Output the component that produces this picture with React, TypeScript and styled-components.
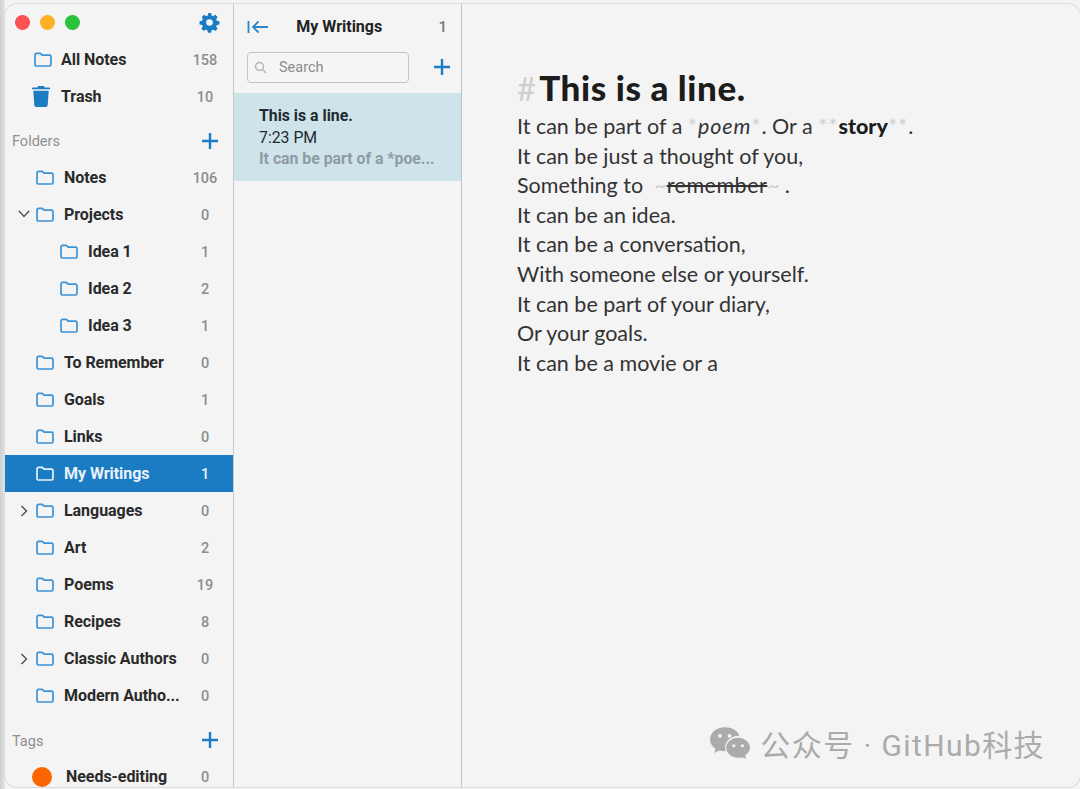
import * as React from 'react';
import styled, { createGlobalStyle } from 'styled-components';

const GlobalStyle = createGlobalStyle`
    html, body { margin: 0; padding: 0; background: #fbfbfb; }
    body { font-family: Roboto, "Liberation Sans", sans-serif; }
`;

const Page = styled.div`
    width: 1080px;
    height: 789px;
    padding: 4px 0 2px 5px;
    box-sizing: border-box;
    overflow: hidden;
    background: linear-gradient(90deg, #cfcfcf 0, #e4e4e4 5px, #f4f4f4 5px);
`;

const Window = styled.div`
    display: flex;
    height: 100%;
    background: #f4f4f4;
    border-radius: 12px;
    box-shadow: 0 0 0 1px #dcdcdc;
    overflow: hidden;
`;

const Sidebar = styled.div`
    width: 228px;
    flex: none;
    border-right: 1px solid #c9c9c9;
    overflow: hidden;
`;

const TopBar = styled.div`
    display: flex;
    align-items: center;
    justify-content: space-between;
    height: 37px;
    padding: 0 13px 0 10px;
    box-sizing: border-box;
`;

const Lights = styled.div`
    display: flex;
    gap: 10px;
`;

const Light = styled.span<{ $color: string }>`
    width: 15px;
    height: 15px;
    border-radius: 50%;
    background: ${p => p.$color};
`;

const Row = styled.div<{ $active?: boolean; $indent?: number }>`
    display: flex;
    align-items: center;
    height: 37px;
    padding-left: ${p => p.$indent ?? 31}px;
    padding-right: 15px;
    box-sizing: border-box;
    position: relative;
    background: ${p => (p.$active ? '#1b7bc3' : 'transparent')};
    color: ${p => (p.$active ? '#e8f2fa' : '#2a2a2a')};
`;

const RowIcon = styled.span<{ $gap?: number }>`
    display: flex;
    width: 18px;
    height: 18px;
    margin-right: ${p => p.$gap ?? 10}px;
    flex: none;
    align-items: center;
    justify-content: center;
`;

const RowLabel = styled.span`
    flex: 1;
    font-size: 16px;
    font-weight: 700;
    letter-spacing: -0.05px;
    white-space: nowrap;
`;

const Count = styled.span<{ $active?: boolean }>`
    width: 26px;
    padding-top: 1px;
    text-align: center;
    font-size: 14.5px;
    font-weight: 500;
    color: ${p => (p.$active ? '#e8f2fa' : '#8d8d8d')};
`;

const Chevron = styled.span`
    position: absolute;
    left: 13px;
    top: 13px;
    width: 12px;
    display: flex;
    justify-content: center;
    color: #555;
`;

const SectionHead = styled.div`
    display: flex;
    align-items: center;
    justify-content: space-between;
    height: 37px;
    margin-top: 7px;
    padding: 0 14px 0 7px;
    box-sizing: border-box;
    font-size: 14.5px;
    color: #8f8f8f;
`;

const SectionLabel = styled.span`
    padding-top: 2px;
`;

const TagsHead = styled(SectionHead)`
    margin-top: 8px;
    height: 36px;
`;

const TagDot = styled.span`
    width: 20px;
    flex: none;
    height: 20px;
    border-radius: 50%;
    background: #fb6500;
`;

const NoteList = styled.div`
    width: 227px;
    flex: none;
    border-right: 1px solid #c2c2c2;
`;

const ListHeader = styled.div`
    display: flex;
    align-items: center;
    height: 44px;
    padding: 1px 14px 0 13px;
    box-sizing: border-box;
`;

const ListTitle = styled.div`
    flex: 1;
    text-align: center;
    font-size: 16px;
    font-weight: 700;
    color: #222;
    padding-right: 28px;
`;

const ListCount = styled.div`
    font-size: 15px;
    font-weight: 500;
    color: #777;
`;

const SearchRow = styled.div`
    display: flex;
    align-items: center;
    justify-content: space-between;
    height: 45px;
    padding: 0 10px 7px 13px;
    box-sizing: border-box;
`;

const SearchBox = styled.div`
    display: flex;
    align-items: center;
    gap: 12px;
    width: 162px;
    height: 31px;
    padding-left: 6px;
    box-sizing: border-box;
    border: 1px solid #c4c4c4;
    border-radius: 4px;
    background: #f5f5f5;
    font-size: 14.5px;
    color: #8b8b8b;
`;

const NoteCard = styled.div`
    height: 88px;
    padding: 12px 10px 0 25px;
    box-sizing: border-box;
    background: #cfe3ea;
    line-height: 21.5px;
    font-size: 15.8px;
`;

const NoteTitle = styled.div`
    font-weight: 700;
    color: #1f2a2f;
`;

const NoteTime = styled.div`
    color: #1f2a2f;
`;

const NotePreview = styled.div`
    font-weight: 700;
    color: #8d9ca3;
    white-space: nowrap;
`;

const Editor = styled.div`
    flex: 1;
    padding: 61px 0 0 55px;
    position: relative;
    font-family: Lato, "Open Sans", sans-serif;
    color: #333;
`;

const Heading = styled.div`
    font-size: 35px;
    line-height: 44px;
    font-weight: 900;
    letter-spacing: 0.6px;
    color: #1c1c1c;
    margin-bottom: 2px;
`;

const Marker = styled.span`
    color: #cfcfcf;
    font-weight: 400;
`;

const HeadingMarker = styled(Marker)`
    margin-right: 3px;
    letter-spacing: 0;
    font-size: 33px;
`;

const InlineMarker = styled(Marker)`
    letter-spacing: 1px;
`;

const ClosingTilde = styled(Marker)`
    margin-right: 5px;
`;

const Line = styled.div`
    font-size: 21.5px;
    line-height: 29.6px;
    white-space: pre;
`;

const Emphasis = styled.em`
    letter-spacing: 0.9px;
`;

const Strong = styled.strong`
    font-weight: 900;
    color: #1c1c1c;
`;

const Struck = styled.span`
    text-decoration: line-through;
    letter-spacing: 0.5px;
`;

const Watermark = styled.div`
    position: absolute;
    right: 35px;
    bottom: 22px;
    display: flex;
    align-items: center;
    gap: 10px;
    color: #ababab;
`;

const WatermarkText = styled.span`
    font-family: Roboto, "Noto Sans CJK SC", sans-serif;
    font-size: 30px;
    letter-spacing: 1.4px;
`;

const FolderIcon = ({ light }: { light?: boolean }) => (
    <svg width="18" height="15" viewBox="0 0 18 15" fill="none" stroke={light ? '#e8f2fa' : '#3b93d6'} strokeWidth="1.7" strokeLinejoin="round">
        <path d="M1 3a1.6 1.6 0 0 1 1.6-1.6h3.2c.7 0 1 .2 1.4.7l.9 1.1h7.3A1.6 1.6 0 0 1 17 4.8v7.6a1.6 1.6 0 0 1-1.6 1.6H2.6A1.6 1.6 0 0 1 1 12.4z" />
    </svg>
);

const PlusIcon = () => (
    <svg width="18" height="18" viewBox="0 0 18 18" stroke="#1b7bc3" strokeWidth="2.4">
        <path d="M9 1v16M1 9h16" />
    </svg>
);

const GearIcon = () => (
    <svg width="21" height="21" viewBox="0 0 24 24" fill="#1b7bc3">
        <path fillRule="evenodd" d="M13.9 1l.5 3c.6.2 1.200.5 1.700.8l2.500-1.700 2.700 2.700-1.700 2.500c.3.500.6 1.100.8 1.700l3 .5v3.800l-3 .5c-.2.600-.5 1.200-.8 1.700l1.700 2.500-2.700 2.700-2.500-1.700c-.5.300-1.100.6-1.700.8l-.5 3h-3.800l-.5-3c-.6-.2-1.200-.5-1.700-.8l-2.500 1.700-2.700-2.700 1.700-2.500c-.3-.5-.6-1.100-.8-1.700l-3-.5v-3.800l3-.5c.2-.6.500-1.200.8-1.700L3.200 5.800l2.700-2.700 2.500 1.700c.5-.3 1.100-.6 1.700-.8l.5-3zM12 8.200a3.800 3.800 0 1 0 0 7.600 3.800 3.800 0 0 0 0-7.600z" />
    </svg>
);

const TrashIcon = () => (
    <svg width="18" height="21" viewBox="0 0 18 21" fill="#1b7bc3">
        <path d="M6 0h6l.6 1.500H17a1 1 0 0 1 1 1v.8H0v-.8a1 1 0 0 1 1-1h4.400z" />
        <path d="M1.300 4.800h15.400l-1 14.400A2 2 0 0 1 13.700 21H4.300a2 2 0 0 1-2-1.800z" />
    </svg>
);

const ChevronDown = () => (
    <svg width="12" height="10" viewBox="0 0 12 10" fill="none" stroke="#555" strokeWidth="1.5">
        <path d="M1 2l5 5.500L11 2" />
    </svg>
);

const ChevronRight = () => (
    <svg width="10" height="12" viewBox="0 0 10 12" fill="none" stroke="#555" strokeWidth="1.5">
        <path d="M2.500 1l5 5-5 5" />
    </svg>
);

const CollapseIcon = () => (
    <svg width="21" height="14" viewBox="0 0 21 14" fill="none" stroke="#2a85c9" strokeWidth="1.800">
        <path d="M1.500 1v12M21 7H6M11.500 1.500L6 7l5.500 5.500" />
    </svg>
);

const SearchIcon = () => (
    <svg width="13" height="13" viewBox="0 0 13 13" fill="none" stroke="#b5b5b5" strokeWidth="1.400">
        <circle cx="5.500" cy="5.500" r="4" />
        <path d="M8.500 8.500L12 12" />
    </svg>
);

const WeChatIcon = () => (
    <svg width="40" height="32" viewBox="0 0 42 33" fill="#ababab">
        <path d="M15.500 0C7 0 0 5.700 0 12.800c0 4 2.300 7.600 5.800 10L4.300 27l5.300-2.700c1.800.5 3.700.8 5.900.8h1a11 11 0 0 1-.6-3.600c0-6.900 6.400-12.500 14.400-12.500h.7C29 3.500 22.800 0 15.500 0z" />
        <path d="M42 21.500C42 15.700 36.300 11 29.500 11S17 15.700 17 21.500 22.700 32 29.500 32c1.500 0 2.900-.2 4.200-.6l4.300 1.600-1.100-3.700c3.100-1.900 5.100-4.700 5.100-7.800z" />
        <g fill="#f4f4f4">
            <circle cx="10.500" cy="9" r="2" />
            <circle cx="20.500" cy="9" r="2" />
            <circle cx="25" cy="19.500" r="1.700" />
            <circle cx="34" cy="19.500" r="1.700" />
        </g>
    </svg>
);

type Folder = { name: string; count: number; indent?: number; chevron?: 'down' | 'right'; active?: boolean };

const folders: Folder[] = [
    { name: 'Notes', count: 106 },
    { name: 'Projects', count: 0, chevron: 'down' },
    { name: 'Idea 1', count: 1, indent: 55 },
    { name: 'Idea 2', count: 2, indent: 55 },
    { name: 'Idea 3', count: 1, indent: 55 },
    { name: 'To Remember', count: 0 },
    { name: 'Goals', count: 1 },
    { name: 'Links', count: 0 },
    { name: 'My Writings', count: 1, active: true },
    { name: 'Languages', count: 0, chevron: 'right' },
    { name: 'Art', count: 2 },
    { name: 'Poems', count: 19 },
    { name: 'Recipes', count: 8 },
    { name: 'Classic Authors', count: 0, chevron: 'right' },
    { name: 'Modern Autho...', count: 0 },
];

const App = () => (
    <Page>
        <GlobalStyle />
        <Window>
            <Sidebar>
                <TopBar>
                    <Lights>
                        <Light $color="#fb5150" />
                        <Light $color="#fdb024" />
                        <Light $color="#2ac23e" />
                    </Lights>
                    <GearIcon />
                </TopBar>
                <Row $indent={29}>
                    <RowIcon $gap={9}><FolderIcon /></RowIcon>
                    <RowLabel>All Notes</RowLabel>
                    <Count>158</Count>
                </Row>
                <Row $indent={27}>
                    <RowIcon $gap={11}><TrashIcon /></RowIcon>
                    <RowLabel>Trash</RowLabel>
                    <Count>10</Count>
                </Row>
                <SectionHead>
                    <SectionLabel>Folders</SectionLabel>
                    <PlusIcon />
                </SectionHead>
                {folders.map(f => (
                    <Row key={f.name} $indent={f.indent} $active={f.active}>
                        {f.chevron && (
                            <Chevron>{f.chevron === 'down' ? <ChevronDown /> : <ChevronRight />}</Chevron>
                        )}
                        <RowIcon><FolderIcon light={f.active} /></RowIcon>
                        <RowLabel>{f.name}</RowLabel>
                        <Count $active={f.active}>{f.count}</Count>
                    </Row>
                ))}
                <TagsHead>
                    <SectionLabel>Tags</SectionLabel>
                    <PlusIcon />
                </TagsHead>
                <Row $indent={28}>
                    <RowIcon $gap={15}><TagDot /></RowIcon>
                    <RowLabel>Needs-editing</RowLabel>
                    <Count>0</Count>
                </Row>
            </Sidebar>
            <NoteList>
                <ListHeader>
                    <CollapseIcon />
                    <ListTitle>My Writings</ListTitle>
                    <ListCount>1</ListCount>
                </ListHeader>
                <SearchRow>
                    <SearchBox>
                        <SearchIcon />
                        Search
                    </SearchBox>
                    <PlusIcon />
                </SearchRow>
                <NoteCard>
                    <NoteTitle>This is a line.</NoteTitle>
                    <NoteTime>7:23 PM</NoteTime>
                    <NotePreview>It can be part of a *poe...</NotePreview>
                </NoteCard>
            </NoteList>
            <Editor>
                <Heading><HeadingMarker>#</HeadingMarker>This is a line.</Heading>
                <Line>It can be part of a <InlineMarker>*</InlineMarker><Emphasis>poem</Emphasis><InlineMarker>*</InlineMarker>. Or a <InlineMarker>**</InlineMarker><Strong>story</Strong><InlineMarker>**</InlineMarker>.</Line>
                <Line>It can be just a thought of you,</Line>
                <Line>Something to  <Marker>~</Marker><Struck>remember</Struck><ClosingTilde>~</ClosingTilde>.</Line>
                <Line>It can be an idea.</Line>
                <Line>It can be a conversation,</Line>
                <Line>With someone else or yourself.</Line>
                <Line>It can be part of your diary,</Line>
                <Line>Or your goals.</Line>
                <Line>It can be a movie or a</Line>
                <Watermark>
                    <WeChatIcon />
                    <WatermarkText>公众号 · GitHub科技</WatermarkText>
                </Watermark>
            </Editor>
        </Window>
    </Page>
);

export default App;
